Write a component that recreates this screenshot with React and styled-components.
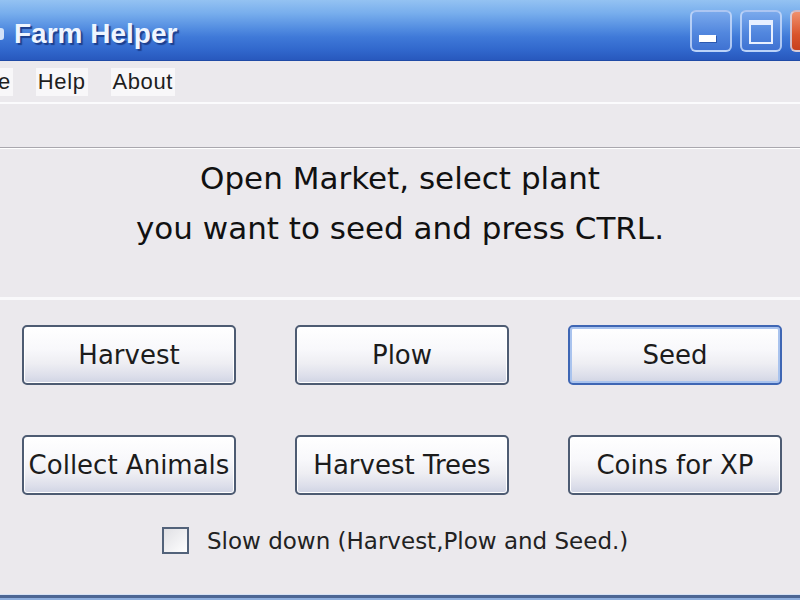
import React from "react";
import styled, { createGlobalStyle } from "styled-components";

const Global = createGlobalStyle`
  html, body { margin: 0; padding: 0; background: #ebe9ed; }
  #root { width: 800px; height: 600px; overflow: hidden; }
`;

const Window = styled.div`
  width: 800px;
  height: 600px;
  display: flex;
  flex-direction: column;
  background: #ebe9ed;
  overflow: hidden;
`;

const TitleBar = styled.div`
  height: 61px;
  flex: 0 0 61px;
  display: flex;
  align-items: center;
  background: linear-gradient(
    to bottom,
    #94c2f2 0%,
    #78aeed 22%,
    #5690e2 45%,
    #3f79d8 62%,
    #3066cb 85%,
    #2858bd 100%
  );
  border-bottom: 1px solid #1f4aa6;
  box-sizing: border-box;
`;

const AppIcon = styled.span`
  width: 12px;
  height: 12px;
  margin-left: -8px;
  margin-right: 10px;
  margin-top: 8px;
  border-radius: 3px;
  background: #d3e2f8;
  flex: 0 0 auto;
`;

const Title = styled.div`
  flex: 1;
  font-family: "Trebuchet MS", "Liberation Sans", sans-serif;
  font-weight: bold;
  font-size: 28px;
  color: #eef5ff;
  text-shadow: 2px 2px 1px #1c3f8e;
  padding-top: 8px;
`;

const Controls = styled.div`
  display: flex;
  gap: 8px;
  margin-right: -32px;
  align-self: flex-start;
  margin-top: 10px;
`;

const CtrlButton = styled.div`
  width: 42px;
  height: 42px;
  box-sizing: border-box;
  border-radius: 6px;
  border: 2px solid rgba(210, 226, 252, 0.75);
  background: ${(p) =>
    p.$close
      ? "linear-gradient(to bottom, #f0906c, #d9542c 60%, #c7401c)"
      : "linear-gradient(to bottom, #7aa9ec, #5287de 55%, #3f72d2)"};
  display: flex;
  align-items: flex-end;
  justify-content: flex-start;
`;

const MinGlyph = styled.span`
  width: 17px;
  height: 7px;
  background: #ffffff;
  margin: 0 0 8px 7px;
  box-shadow: 1px 1px 0 #2b58b0;
`;

const MaxGlyph = styled.span`
  width: 24px;
  height: 24px;
  box-sizing: border-box;
  border: 2px solid #e8f0ff;
  border-top-width: 5px;
  margin: 0 0 6px 7px;
`;

const MenuBar = styled.div`
  height: 41px;
  flex: 0 0 41px;
  display: flex;
  align-items: center;
  gap: 23px;
  border-bottom: 2px solid #fbfbfd;
`;

const MenuItem = styled.div`
  font-family: Tahoma, "Liberation Sans", sans-serif;
  font-size: 22px;
  letter-spacing: 0.6px;
  color: #1e1e1e;
  background: #f8f7f9;
  height: 28px;
  line-height: 28px;
  padding: 0 2px;
  margin-left: ${(p) => p.$shift || "0px"};
`;

const ToolStrip = styled.div`
  height: 43px;
  flex: 0 0 43px;
  border-bottom: 1px solid #a9a7ae;
  box-shadow: 0 1px 0 #ffffff;
`;

const Message = styled.div`
  height: 152px;
  flex: 0 0 152px;
  box-sizing: border-box;
  padding-top: 5px;
  text-align: center;
  font-family: "Comic Sans MS", "DejaVu Sans", sans-serif;
  font-size: 31px;
  line-height: 50px;
  color: #111;
  border-bottom: 3px solid #f9f9fb;
`;

const ButtonGrid = styled.div`
  display: grid;
  grid-template-columns: repeat(3, 214px);
  grid-auto-rows: 60px;
  column-gap: 59px;
  row-gap: 50px;
  padding: 25px 0 0 22px;
`;

const ActionButton = styled.button`
  box-sizing: border-box;
  margin: 0;
  padding: 0;
  width: 214px;
  height: 60px;
  border-radius: 5px;
  border: 2px solid ${(p) => (p.$default ? "#3e66b4" : "#4d5b72")};
  box-shadow: ${(p) =>
    p.$default ? "inset 0 0 0 2px #a9c3ee" : "inset 0 0 0 1px #ffffff"};
  background: linear-gradient(
    to bottom,
    #ffffff 0%,
    #f8f8fb 40%,
    #eeeef3 65%,
    #dcdeea 88%,
    #cfd3e3 100%
  );
  font-family: "Comic Sans MS", "DejaVu Sans", sans-serif;
  font-size: 26px;
  color: #1c1c1c;
  white-space: nowrap;
  overflow: hidden;
`;

const OptionRow = styled.label`
  display: flex;
  align-items: center;
  gap: 18px;
  padding-left: 162px;
  margin-top: 32px;
  height: 27px;
`;

const Box = styled.span`
  width: 27px;
  height: 27px;
  box-sizing: border-box;
  border: 2px solid #52627a;
  background: linear-gradient(135deg, #e0e0e4 0%, #f2f2f4 60%, #ffffff 100%);
  flex: 0 0 auto;
`;

const OptionText = styled.span`
  font-family: "Comic Sans MS", "DejaVu Sans", sans-serif;
  font-size: 23px;
  color: #222;
  white-space: nowrap;
`;

const BottomFrame = styled.div`
  margin-top: auto;
  height: 6px;
  flex: 0 0 6px;
  background: linear-gradient(
    to bottom,
    #d7e2f4 0%,
    #d7e2f4 20%,
    #4c6694 20%,
    #4c6694 65%,
    #8eaedd 65%
  );
`;

const actions = [
  { label: "Harvest" },
  { label: "Plow" },
  { label: "Seed", isDefault: true },
  { label: "Collect Animals" },
  { label: "Harvest Trees" },
  { label: "Coins for XP" },
];

export default function App() {
  return (
    <>
      <Global />
      <Window>
        <TitleBar>
          <AppIcon />
          <Title>Farm Helper</Title>
          <Controls>
            <CtrlButton>
              <MinGlyph />
            </CtrlButton>
            <CtrlButton>
              <MaxGlyph />
            </CtrlButton>
            <CtrlButton $close />
          </Controls>
        </TitleBar>
        <MenuBar>
          <MenuItem $shift="-29px">File</MenuItem>
          <MenuItem>Help</MenuItem>
          <MenuItem>About</MenuItem>
        </MenuBar>
        <ToolStrip />
        <Message>
          Open Market, select plant
          <br />
          you want to seed and press CTRL.
        </Message>
        <ButtonGrid>
          {actions.map((a) => (
            <ActionButton key={a.label} $default={a.isDefault}>
              {a.label}
            </ActionButton>
          ))}
        </ButtonGrid>
        <OptionRow>
          <Box />
          <OptionText>Slow down (Harvest,Plow and Seed.)</OptionText>
        </OptionRow>
        <BottomFrame />
      </Window>
    </>
  );
}
